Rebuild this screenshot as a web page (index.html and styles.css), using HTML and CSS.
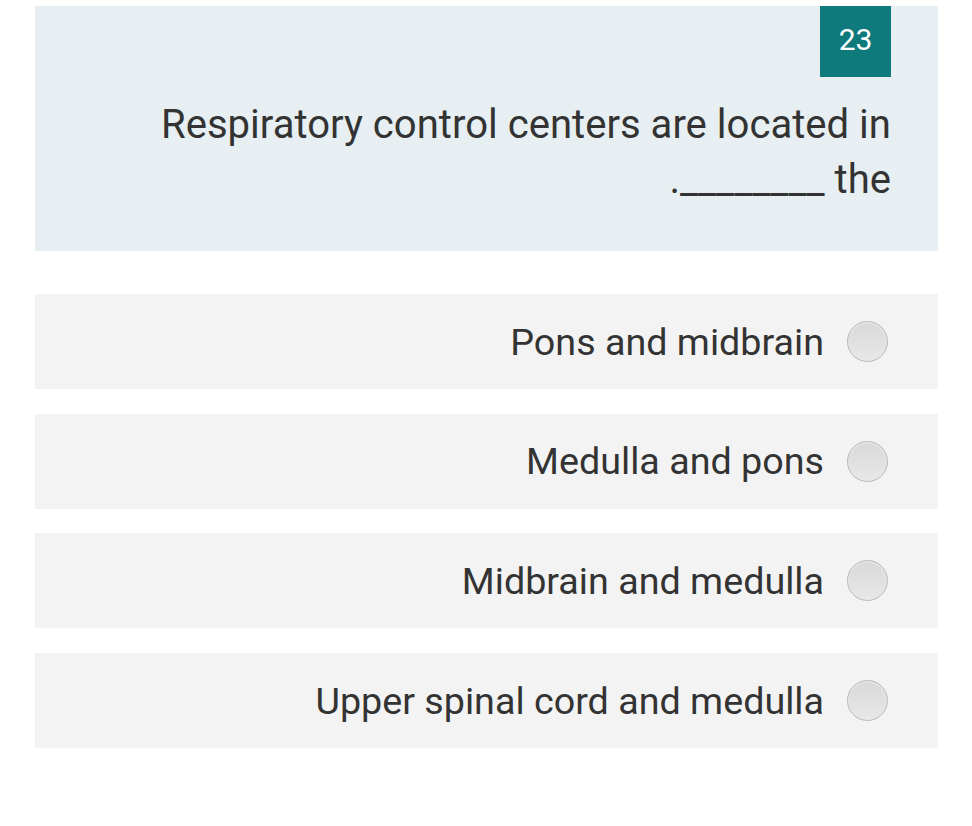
FILE: index.html
```html
<!DOCTYPE html>
<html lang="en">
    <head>
        <meta charset="utf-8">
        <meta name="viewport" content="width=device-width, initial-scale=1">
        <title>Question 23</title>
        <link rel="stylesheet" href="styles.css">
    </head>
    <body>
        <main class="quiz">
            <!-- question -->
            <section class="question">
                <div class="question-number">23</div>
                <p class="question-text">Respiratory control centers are located in the ________.</p>
            </section>

            <!-- answers -->
            <ul class="answers">
                <li class="answer">
                    <label>
                        <span class="answer-text">Pons and midbrain</span>
                        <span class="radio"></span>
                    </label>
                </li>
                <li class="answer">
                    <label>
                        <span class="answer-text">Medulla and pons</span>
                        <span class="radio"></span>
                    </label>
                </li>
                <li class="answer">
                    <label>
                        <span class="answer-text">Midbrain and medulla</span>
                        <span class="radio"></span>
                    </label>
                </li>
                <li class="answer">
                    <label>
                        <span class="answer-text">Upper spinal cord and medulla</span>
                        <span class="radio"></span>
                    </label>
                </li>
            </ul>
        </main>
    </body>
</html>
```

FILE: styles.css
```css
/* page */
body {
    margin: 0;
    padding: 0;
    background: #fff;
    font-family: Roboto, "Liberation Sans", sans-serif;
    color: #333;
}

.quiz {
    margin: 6px 34px 0 35px;
}

/* question block */
.question {
    background-color: #e7eff2;
    display: flex;
    flex-direction: column;
    align-items: flex-end;
    padding: 0 47px 44px 100px;
}

.question-number {
    width: 71px;
    height: 71px;
    background-color: #0e7a7b;
    color: #fff;
    font-size: 30px;
    display: flex;
    align-items: center;
    justify-content: center;
    padding-bottom: 4px;
    box-sizing: border-box;
}

.question-text {
    margin: 20px 0 0 0;
    font-size: 40.1px;
    line-height: 55px;
    text-align: right;
    direction: rtl;
}

/* answers */
.answers {
    list-style: none;
    margin: 43px 0 0 0;
    padding: 0;
    display: flex;
    flex-direction: column;
    gap: 24.7px;
}

.answer {
    background-color: #f3f3f3;
    height: 95px;
}

.answer label {
    height: 100%;
    display: flex;
    align-items: center;
    justify-content: flex-end;
    gap: 23px;
    padding-right: 50px;
    font-size: 37.7px;
}

.radio {
    width: 39px;
    height: 39px;
    border-radius: 50%;
    border: 1px solid #b8b8b8;
    background: linear-gradient(#d8d8d8, #e8e8e8);
    box-shadow: inset 0 1px 2px rgba(255, 255, 255, 0.6);
}
```
